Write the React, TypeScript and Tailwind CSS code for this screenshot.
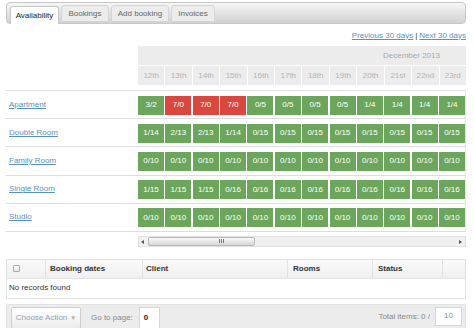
import React from "react";

const days = ["12th", "13th", "14th", "15th", "16th", "17th", "18th", "19th", "20th", "21st", "22nd", "23rd"];

const rows: { name: string; cells: string[]; red?: number[] }[] = [
  { name: "Apartment", cells: ["3/2", "7/0", "7/0", "7/0", "0/5", "0/5", "0/5", "0/5", "1/4", "1/4", "1/4", "1/4"], red: [1, 2, 3] },
  { name: "Double Room", cells: ["1/14", "2/13", "2/13", "1/14", "0/15", "0/15", "0/15", "0/15", "0/15", "0/15", "0/15", "0/15"] },
  { name: "Family Room", cells: ["0/10", "0/10", "0/10", "0/10", "0/10", "0/10", "0/10", "0/10", "0/10", "0/10", "0/10", "0/10"] },
  { name: "Single Room", cells: ["1/15", "1/15", "1/15", "0/16", "0/16", "0/16", "0/16", "0/16", "0/16", "0/16", "0/16", "0/16"] },
  { name: "Studio", cells: ["0/10", "0/10", "0/10", "0/10", "0/10", "0/10", "0/10", "0/10", "0/10", "0/10", "0/10", "0/10"] },
];

export default function App() {
  return (
    <div className="w-[474px] h-[328px] bg-white overflow-hidden font-['Liberation_Sans',Arial,sans-serif] text-[8px] leading-none text-[#333]">
      <div className="ml-[6px] w-[460px] pt-[2px]">
        {/* Tab bar */}
        <div className="h-[22px] rounded-[4px] border border-[#c8c8c8] bg-gradient-to-b from-[#f6f6f6] to-[#d2d2d2] flex items-end pl-[3px] gap-[2px]">
          <div className="h-[18px] w-[49px] -mb-px bg-white border border-b-0 border-[#c8c8c8] rounded-t-[3px] flex items-center justify-center text-[#222]">
            Availability
          </div>
          <div className="h-[17px] w-[48px] mb-px bg-[#ececec] border border-[#d4d4d4] rounded-t-[3px] flex items-center justify-center text-[#666]">
            Bookings
          </div>
          <div className="h-[17px] w-[58px] mb-px bg-[#ececec] border border-[#d4d4d4] rounded-t-[3px] flex items-center justify-center text-[#666]">
            Add booking
          </div>
          <div className="h-[17px] w-[44px] mb-px bg-[#ececec] border border-[#d4d4d4] rounded-t-[3px] flex items-center justify-center text-[#666]">
            Invoices
          </div>
        </div>

        {/* Prev/next */}
        <div className="h-[21px] flex items-center justify-end mt-[1px]">
          <span className="text-[#5b8fc2] underline">Previous 30 days</span>
          <span className="text-[#333] mx-[2px]">|</span>
          <span className="text-[#5b8fc2] underline">Next 30 days</span>
        </div>

        {/* Header */}
        <div className="ml-[132px] w-[328px] bg-[#ececec]">
          <div className="h-[19px] flex items-center pl-[245px] text-[#a9a9a9]">December 2013</div>
          <div className="grid grid-cols-12 gap-px border-t border-white">
            {days.map((d) => (
              <div key={d} className="h-[19px] flex items-center justify-center text-[#b4b4b4] outline outline-1 outline-white">
                {d}
              </div>
            ))}
          </div>
        </div>
        <div className="h-[5px]" />

        {/* Rows */}
        <div className="border-b border-[#dcdce4]">
          {rows.map((r) => (
            <div key={r.name} className="flex border-t border-[#dcdce4]">
              <div className="w-[132px] pl-[3px] flex items-center">
                <span className="text-[#5b8fc2] underline">{r.name}</span>
              </div>
              <div className="w-[328px] pt-[4.6px] pb-[3.6px] border-r border-[#e4e4ea]">
                <div className="grid grid-cols-12 gap-[1.3px]">
                  {r.cells.map((c, i) => (
                    <div
                      key={i}
                      className={`h-[19px] flex items-center justify-center text-white ${r.red && r.red.includes(i) ? "bg-[#d9473f]" : "bg-[#6ca65c]"}`}
                    >
                      {c}
                    </div>
                  ))}
                </div>
              </div>
            </div>
          ))}
        </div>

        {/* Scrollbar */}
        <div className="ml-[132px] w-[328px] mt-[4px] h-[11px] bg-[#f0f0f0] border border-[#e2e2e2] flex items-center relative">
          <span className="absolute left-[2px] top-[3px] w-0 h-0 border-y-[2.5px] border-y-transparent border-r-[3px] border-r-[#555]" />
          <div className="absolute left-[9px] top-0 w-[107px] h-[9px] rounded-[2px] border border-[#b8b8b8] bg-gradient-to-b from-[#fafafa] to-[#d6d6d6] flex items-center justify-center gap-[1px] pl-[40px]">
            <span className="w-px h-[4px] bg-[#777]" />
            <span className="w-px h-[4px] bg-[#777]" />
            <span className="w-px h-[4px] bg-[#777]" />
          </div>
          <span className="absolute right-[3px] top-[3px] w-0 h-0 border-y-[2.5px] border-y-transparent border-l-[3px] border-l-[#555]" />
        </div>

        {/* Bookings table */}
        <div className="mt-[12px] border border-[#e0e0e0]">
          <div className="flex h-[19px] bg-gradient-to-b from-[#fafafa] to-[#f0f0f0] border-b border-[#e4e4e4] font-bold text-[#333]">
            <div className="w-[39px] border-r border-[#e2e2e2] flex items-center pl-[6px]">
              <span className="w-[7px] h-[7px] border border-[#aaa] bg-gradient-to-b from-white to-[#e4e4e4] rounded-[1px]" />
            </div>
            <div className="w-[97px] border-r border-[#e2e2e2] flex items-center pl-[4px]">Booking dates</div>
            <div className="w-[145px] border-r border-[#e2e2e2] flex items-center pl-[3px]">Client</div>
            <div className="w-[85px] border-r border-[#e2e2e2] flex items-center pl-[5px]">Rooms</div>
            <div className="w-[70px] border-r border-[#e2e2e2] flex items-center pl-[5px]">Status</div>
            <div className="flex-1" />
          </div>
          <div className="h-[19px] flex items-center pl-[2px] text-[#333]">No records found</div>
        </div>

        {/* Footer */}
        <div className="mt-[5px] h-[30px] bg-[#ececec] border border-[#e2e2e2] rounded-t-[2px] flex items-start pt-[2px] pl-[4px] pr-[3px]">
          <div className="h-[22px] w-[70px] border border-[#cfcfcf] rounded-[2px] bg-gradient-to-b from-white to-[#ededed] flex items-center justify-center text-[#8fa6ba]">
            Choose Action
            <span className="ml-[3px] text-[6px] text-[#aaa]">▼</span>
          </div>
          <div className="ml-[10px] h-[22px] flex items-center text-[#8a8a8a]">Go to page:</div>
          <div className="ml-[6px] h-[22px] w-[21px] bg-white border border-[#d6d6d6] flex items-center pl-[4px] text-[#222] font-bold">0</div>
          <div className="flex-1" />
          <div className="h-[19px] flex items-center text-[#8a8a8a] pt-[1px]">Total items: 0 /</div>
          <div className="ml-[5px] h-[19px] w-[27px] bg-white border border-[#d6d6d6] flex items-center justify-center text-[#6b98b0]">10</div>
        </div>
      </div>
    </div>
  );
}
